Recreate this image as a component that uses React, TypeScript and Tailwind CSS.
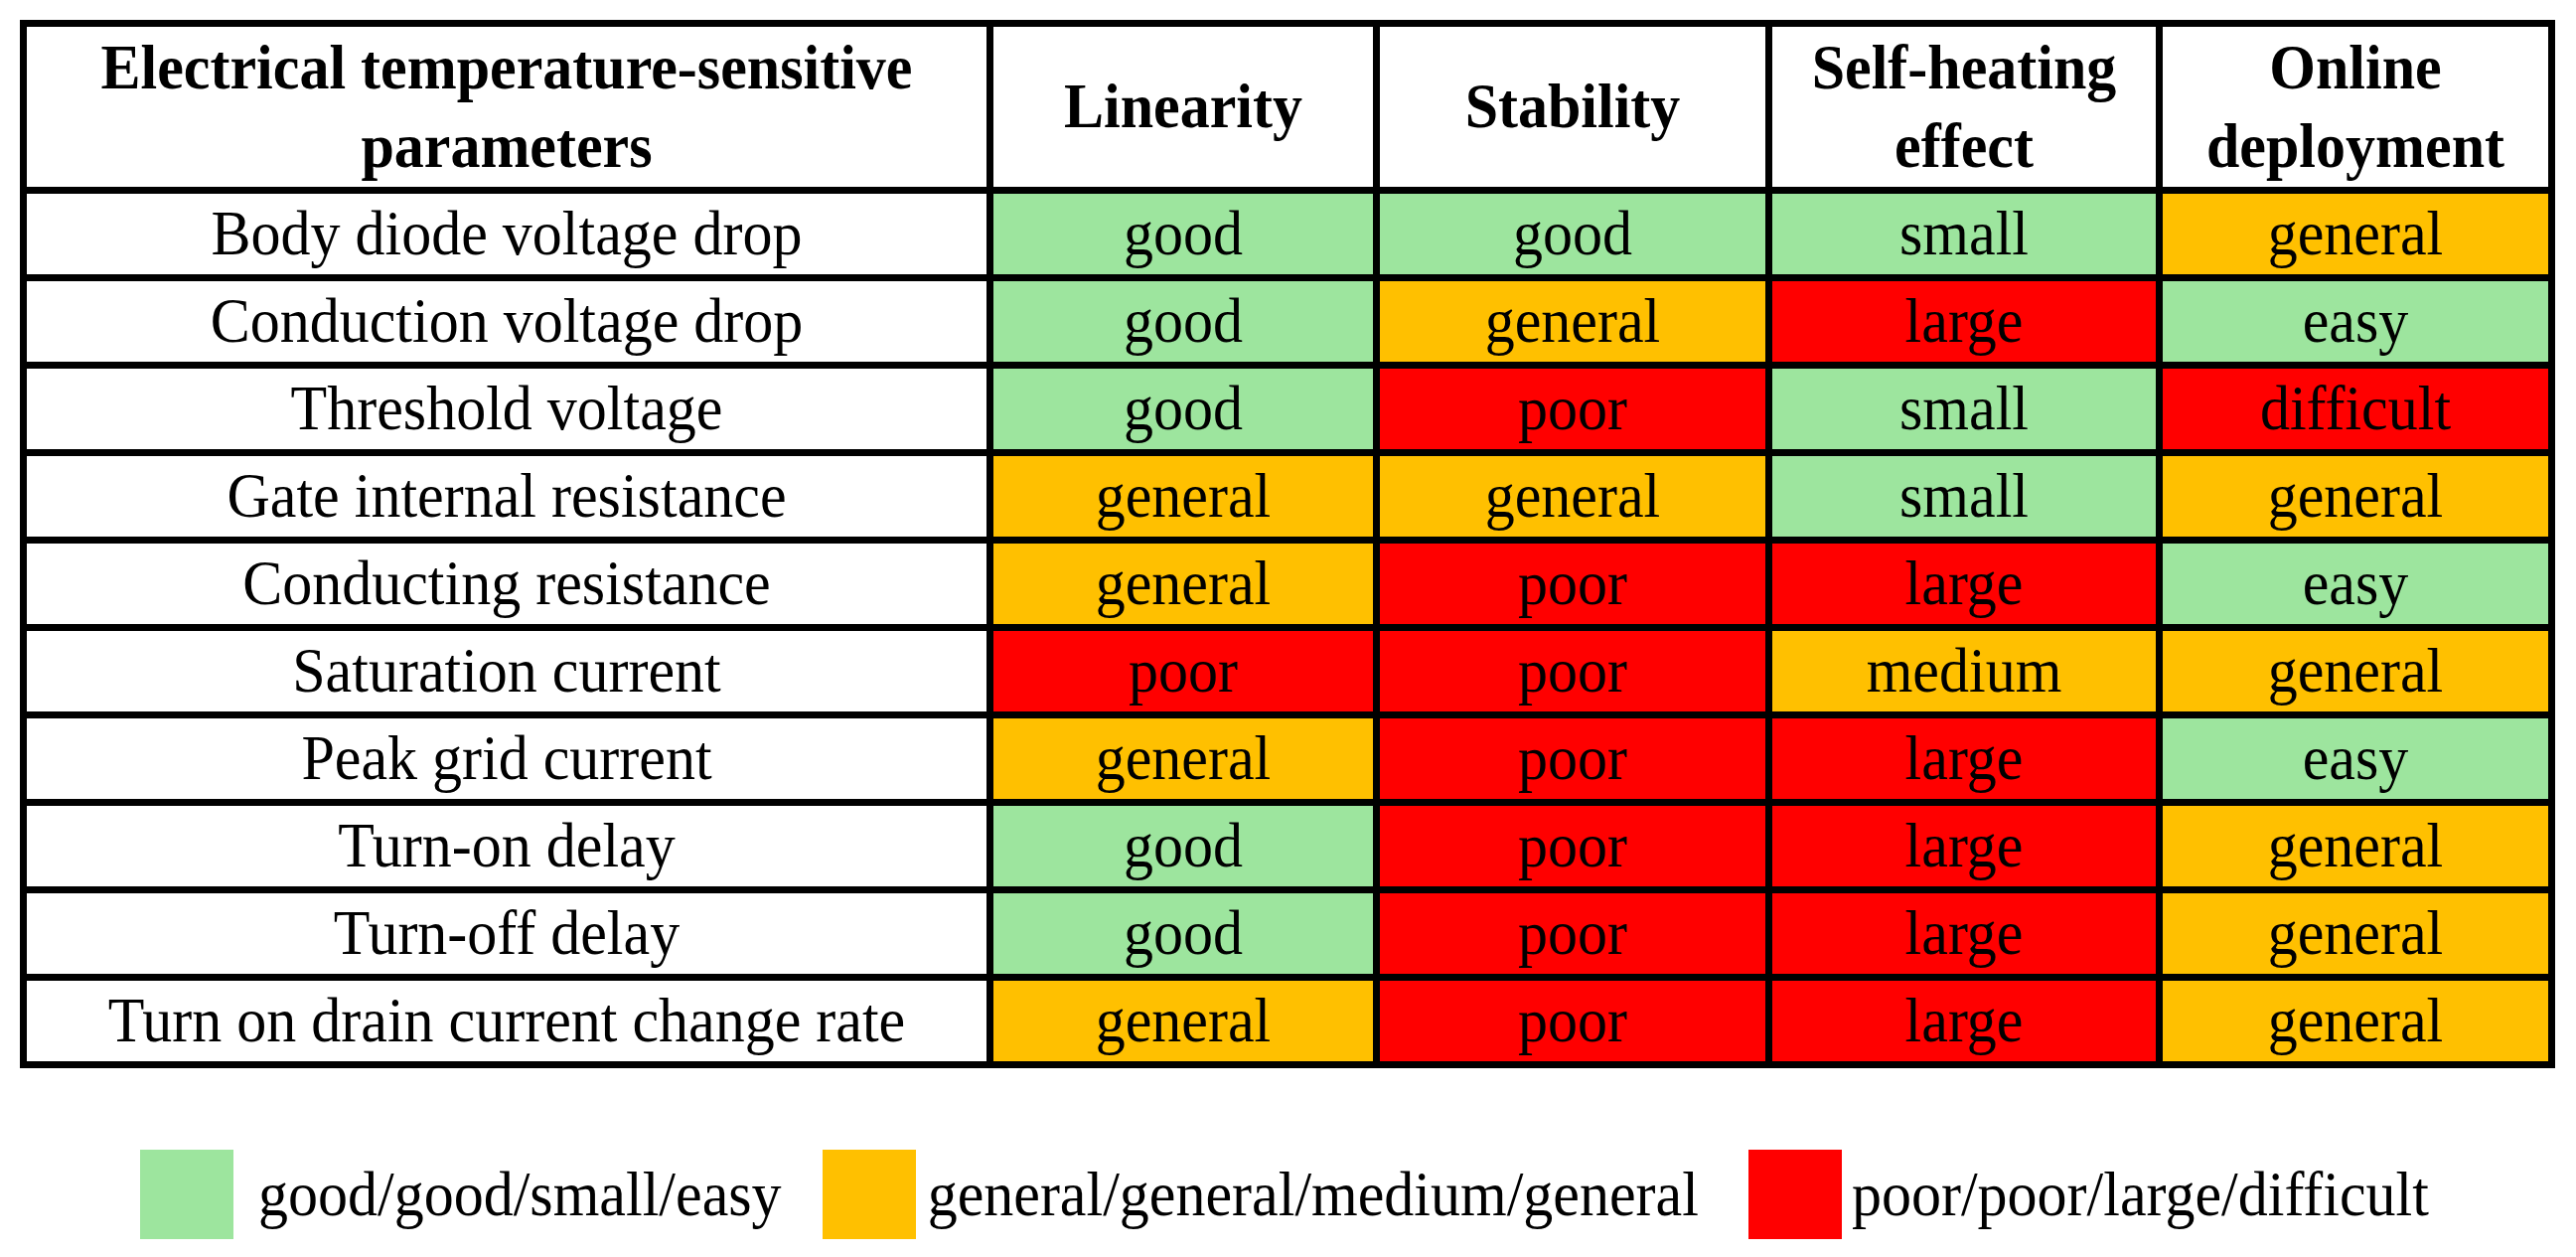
import { Fragment } from 'react';

type Level = 'g' | 'o' | 'r';

interface Row {
  name: string;
  cells: [string, Level][];
}

const rows: Row[] = [
  { name: 'Body diode voltage drop', cells: [['good', 'g'], ['good', 'g'], ['small', 'g'], ['general', 'o']] },
  { name: 'Conduction voltage drop', cells: [['good', 'g'], ['general', 'o'], ['large', 'r'], ['easy', 'g']] },
  { name: 'Threshold voltage', cells: [['good', 'g'], ['poor', 'r'], ['small', 'g'], ['difficult', 'r']] },
  { name: 'Gate internal resistance', cells: [['general', 'o'], ['general', 'o'], ['small', 'g'], ['general', 'o']] },
  { name: 'Conducting resistance', cells: [['general', 'o'], ['poor', 'r'], ['large', 'r'], ['easy', 'g']] },
  { name: 'Saturation current', cells: [['poor', 'r'], ['poor', 'r'], ['medium', 'o'], ['general', 'o']] },
  { name: 'Peak grid current', cells: [['general', 'o'], ['poor', 'r'], ['large', 'r'], ['easy', 'g']] },
  { name: 'Turn-on delay', cells: [['good', 'g'], ['poor', 'r'], ['large', 'r'], ['general', 'o']] },
  { name: 'Turn-off delay', cells: [['good', 'g'], ['poor', 'r'], ['large', 'r'], ['general', 'o']] },
  { name: 'Turn on drain current change rate', cells: [['general', 'o'], ['poor', 'r'], ['large', 'r'], ['general', 'o']] },
];

const bg: Record<Level, string> = {
  g: 'bg-[#9de59e]',
  o: 'bg-[#ffc000]',
  r: 'bg-[#ff0000]',
};

const headers = ['Linearity', 'Stability', 'Self-heating effect', 'Online deployment'];

export default function App() {
  return (
    <div className="bg-white pt-[20px] pl-[20px] text-black" style={{ fontFamily: '"Liberation Serif", "Times New Roman", serif' }}>
      {/* tabela */}
      <div className="grid w-[2552px] grid-cols-[966px_382px_388px_386px_388px] grid-rows-[161px_repeat(10,81px)] gap-[7px] bg-black p-[7px] text-[60px] leading-[75px]">
        <div className="flex items-center justify-center bg-white px-4 text-center font-bold">
          <span className="inline-block scale-y-[1.06]">Electrical temperature-sensitive parameters</span>
        </div>
        {headers.map((h) => (
          <div key={h} className="flex items-center justify-center bg-white px-2 text-center font-bold">
            <span className="inline-block scale-y-[1.06]">{h}</span>
          </div>
        ))}
        {rows.map((row) => (
          <Fragment key={row.name}>
            <div className="flex items-center justify-center bg-white text-center">
              <span className="inline-block scale-y-[1.06]">{row.name}</span>
            </div>
            {row.cells.map(([label, lvl], i) => (
              <div key={i} className={`flex items-center justify-center text-center ${bg[lvl]}`}>
                <span className="inline-block scale-y-[1.06]">{label}</span>
              </div>
            ))}
          </Fragment>
        ))}
      </div>

      {/* legenda */}
      <div className="mt-[82px] ml-[121px] flex items-center text-[60px] leading-[75px]">
        <div className="h-[90px] w-[94px] bg-[#9de59e]" />
        <span className="ml-[25px] inline-block scale-y-[1.06]">good/good/small/easy</span>
        <div className="ml-[41px] h-[90px] w-[94px] bg-[#ffc000]" />
        <span className="ml-[12px] inline-block scale-y-[1.06]">general/general/medium/general</span>
        <div className="ml-[50px] h-[90px] w-[94px] bg-[#ff0000]" />
        <span className="ml-[10px] inline-block scale-y-[1.06]">poor/poor/large/difficult</span>
      </div>
    </div>
  );
}
